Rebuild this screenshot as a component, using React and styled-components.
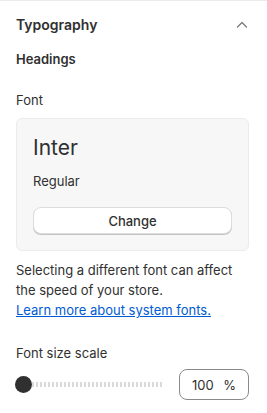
import React from 'react'
import styled, { createGlobalStyle } from 'styled-components'

const Global = createGlobalStyle`
  body {
    margin: 0;
    background: #fff;
    font-family: Inter, "Noto Sans", sans-serif;
    color: #303030;
  }
`

const Panel = styled.section`
  width: 267px;
  box-sizing: border-box;
  border-top: 1px solid #ebebeb;
  padding: 14px 18px 0 16px;
`

const Header = styled.div`
  display: flex;
  align-items: center;
  justify-content: space-between;
  height: 20px;
`

const Title = styled.h2`
  margin: 0;
  font-size: 14px;
  line-height: 20px;
  font-weight: 600;
`

const Toggle = styled.button`
  display: flex;
  padding: 0;
  border: 0;
  background: none;
  color: #7a7a7a;
  margin-right: -1px;
`

const SubTitle = styled.h3`
  margin: 14px 0 0;
  font-size: 13px;
  line-height: 20px;
  font-weight: 600;
`

const Label = styled.div`
  margin-top: ${p => p.$top || 0}px;
  font-size: 13px;
  line-height: 20px;
`

const Card = styled.div`
  margin-top: 8px;
  background: #f7f7f7;
  border: 1px solid #ebebeb;
  border-radius: 6px;
  padding: 15px 16px 16px;
`

const FontName = styled.div`
  font-size: 21px;
  line-height: 28px;
`

const Variant = styled.div`
  margin-top: 9px;
  font-size: 13px;
  line-height: 20px;
`

const Button = styled.button`
  display: block;
  width: 100%;
  height: 27px;
  margin-top: 16px;
  background: #fff;
  border: 1px solid #dcdcdc;
  border-radius: 8px;
  box-shadow: 0 1px 0 #c4c4c4;
  font-family: inherit;
  font-size: 13px;
  font-weight: 500;
  color: #303030;
`

const Help = styled.p`
  margin: 9px 0 0;
  font-size: 13px;
  line-height: 20px;
  color: #303030;
`

const Link = styled.a`
  display: block;
  color: #005bd3;
  text-decoration: underline;
`

const SliderRow = styled.div`
  display: flex;
  align-items: center;
  gap: 16px;
  margin-top: 6px;
`

const Slider = styled.div`
  position: relative;
  flex: 1;
  height: 17px;
  display: flex;
  align-items: center;
`

const Track = styled.div`
  flex: 1;
  height: 5px;
  margin-left: 16px;
  background: repeating-linear-gradient(90deg, #dadada 0 2px, transparent 2px 4px);
`

const Knob = styled.div`
  position: absolute;
  left: -1px;
  top: 0;
  width: 17px;
  height: 17px;
  border-radius: 50%;
  background: #303030;
`

const Field = styled.div`
  width: 70px;
  height: 31px;
  box-sizing: border-box;
  border: 1px solid #8a8a8a;
  border-radius: 8px;
  display: flex;
  align-items: center;
  padding: 0 12px 0 12px;
  font-size: 13px;
`

const Value = styled.span`
  flex: 1;
`

const Chevron = () => (
  <svg width="16" height="16" viewBox="0 0 16 16" fill="none">
    <path d="M3.5 10 L8 5.5 L12.5 10" stroke="currentColor" strokeWidth="1.3" strokeLinecap="round" strokeLinejoin="round" />
  </svg>
)

export default function App() {
  return (
    <>
      <Global />
      <Panel>
        <Header>
          <Title>Typography</Title>
          <Toggle aria-label="Collapse"><Chevron /></Toggle>
        </Header>
        <SubTitle>Headings</SubTitle>
        <Label $top={21}>Font</Label>
        <Card>
          <FontName>Inter</FontName>
          <Variant>Regular</Variant>
          <Button>Change</Button>
        </Card>
        <Help>
          Selecting a different font can affect the speed of your store.
          <Link href="#">Learn more about system fonts.</Link>
        </Help>
        <Label $top={23}>Font size scale</Label>
        <SliderRow>
          <Slider>
            <Knob />
            <Track />
          </Slider>
          <Field>
            <Value>100</Value>
            <span>%</span>
          </Field>
        </SliderRow>
      </Panel>
    </>
  )
}
